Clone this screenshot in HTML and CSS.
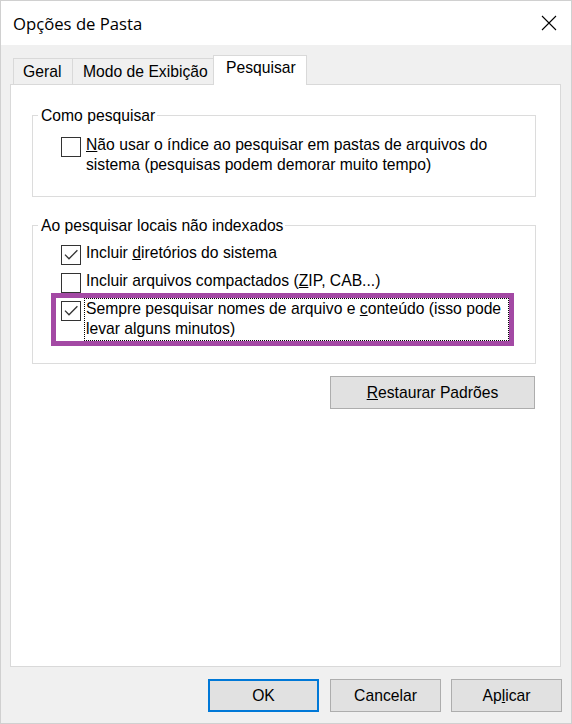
FILE: index.html
```html
<!DOCTYPE html>
<html lang="pt">
<head>
<meta charset="utf-8">
<title>Opções de Pasta</title>
<link rel="stylesheet" href="styles.css">
</head>
<body>
<div class="window">
  <div class="titlebar">
    <span class="title">Opções de Pasta</span>
    <svg class="close" width="16" height="16" viewBox="0 0 16 16"><path d="M1 1 L15 15 M15 1 L1 15" stroke="#000" stroke-width="1.1" fill="none"/></svg>
  </div>
  <div class="content">
    <div class="tabs">
      <div class="tab tab-geral">Geral</div>
      <div class="tab tab-modo">Modo de Exibição</div>
      <div class="tab tab-pesq active">Pesquisar</div>
    </div>
    <div class="panel">
      <div class="group g1">
        <div class="legend">Como pesquisar</div>
        <div class="row">
          <span class="cb"></span>
          <span class="label"><u>N</u>ão usar o índice ao pesquisar em pastas de arquivos do<br>sistema (pesquisas podem demorar muito tempo)</span>
        </div>
      </div>
      <div class="group g2">
        <div class="legend">Ao pesquisar locais não indexados</div>
        <div class="row">
          <span class="cb checked"><svg viewBox="0 0 18 18" width="18" height="18"><path d="M3 8.6 L7 12.8 L15.4 4.2" stroke="#333" stroke-width="1.3" fill="none"/></svg></span>
          <span class="label">Incluir <u>d</u>iretórios do sistema</span>
        </div>
        <div class="row">
          <span class="cb"></span>
          <span class="label">Incluir arquivos compactados (<u>Z</u>IP, CAB...)</span>
        </div>
        <div class="row highlight">
          <span class="cb checked"><svg viewBox="0 0 18 18" width="18" height="18"><path d="M3 8.6 L7 12.8 L15.4 4.2" stroke="#333" stroke-width="1.3" fill="none"/></svg></span>
          <span class="label focus">Sempre pesquisar nomes de arquivo e <u>c</u>onteúdo (isso pode<br>levar alguns minutos)</span>
        </div>
      </div>
      <div class="restore-row">
        <button class="btn restore"><u>R</u>estaurar Padrões</button>
      </div>
    </div>
    <div class="footer">
      <button class="btn default">OK</button>
      <button class="btn">Cancelar</button>
      <button class="btn">Ap<u>l</u>icar</button>
    </div>
  </div>
</div>
</body>
</html>
```
FILE: styles.css
```css
* { box-sizing: border-box; }
html, body { margin: 0; padding: 0; background: #f0f0f0; }
body {
  font-family: "Liberation Sans", Arial, sans-serif;
  font-size: 15.7px;
  color: #000;
}
.window {
  width: 572px;
  height: 724px;
  border: 1px solid #d0d0d0;
  background: #f0f0f0;
  display: flex;
  flex-direction: column;
}
.titlebar {
  height: 44px;
  background: #fff;
  display: flex;
  align-items: center;
  padding-left: 12px;
  padding-right: 14px;
  flex: none;
}
.title {
  font-family: "Open Sans", "Noto Sans", sans-serif;
  font-size: 16.7px;
  flex: 1;
  padding-top: 1px;
}
.close { display: block; margin-top: 0; }
.content {
  flex: 1;
  padding: 10px 10px 0 9px;
  display: flex;
  flex-direction: column;
}
.tabs {
  display: flex;
  align-items: flex-end;
  margin-left: 3px;
  height: 29px;
}
.tab {
  height: 26px;
  border: 1px solid #d9d9d9;
  border-bottom: none;
  background: #f0f0f0;
  line-height: 24px;
  padding-top: 1px;
  white-space: nowrap;
}
.tab + .tab { margin-left: -1px; }
.tab-geral { width: 60px; padding-left: 9px; }
.tab-modo { width: 142px; padding-left: 10px; }
.tab-pesq { width: 94px; padding-left: 12px; }
.tab.active {
  height: 30px;
  background: #fff;
  padding-top: 0;
  margin-bottom: -1px;
  position: relative;
  z-index: 1;
}
.panel {
  height: 583px;
  border: 1px solid #d9d9d9;
  background: #fff;
  padding: 0 24px 0 21px;
  flex: none;
}
.group {
  border: 1px solid #dcdcdc;
  padding-left: 28px;
}
.g1 { margin-top: 30px; padding-bottom: 20px; }
.g2 { margin-top: 28px; padding-bottom: 22px; }
.legend {
  display: table;
  margin-top: -9px;
  margin-left: -23px;
  padding: 0 2px 0 3px;
  background: #fff;
  line-height: 18px;
}
.g1 .legend { margin-bottom: 9px; }
.g2 .legend { margin-bottom: 7px; }
.row {
  display: flex;
  align-items: flex-start;
}
.row + .row { margin-top: 5px; }
.cb {
  flex: none;
  width: 20px;
  height: 20px;
  margin-top: 3px;
  border: 1px solid #333;
  background: #fff;
  display: flex;
  align-items: center;
  justify-content: center;
}
.cb svg { display: block; }
.label {
  margin-left: 3px;
  border: 1px solid transparent;
  padding: 0 1px;
  line-height: 20px;
  white-space: nowrap;
}
.row.highlight {
  margin-left: -5px;
  padding-left: 5px;
  width: 453px;
  outline: 5px solid #a349a4;
}
.label.focus {
  flex: 1;
  border: 1px dotted #000;
  padding-bottom: 1px;
}
.restore-row {
  display: flex;
  justify-content: flex-end;
  margin-top: 12px;
  margin-right: 1px;
}
.btn {
  font-family: "Liberation Sans", Arial, sans-serif;
  font-size: 15.7px;
  color: #000;
  background: #e1e1e1;
  border: 1px solid #adadad;
  height: 33px;
  width: 111px;
  padding: 0;
  margin: 0;
  line-height: 31px;
  text-align: center;
}
.btn.restore { width: 205px; }
.btn.default { border: 2px solid #0078d7; line-height: 29px; }
.footer {
  display: flex;
  justify-content: flex-end;
  gap: 11px;
  margin-top: 12px;
  margin-right: -1px;
}
.footer .btn:last-child { margin-left: -1px; }
```
